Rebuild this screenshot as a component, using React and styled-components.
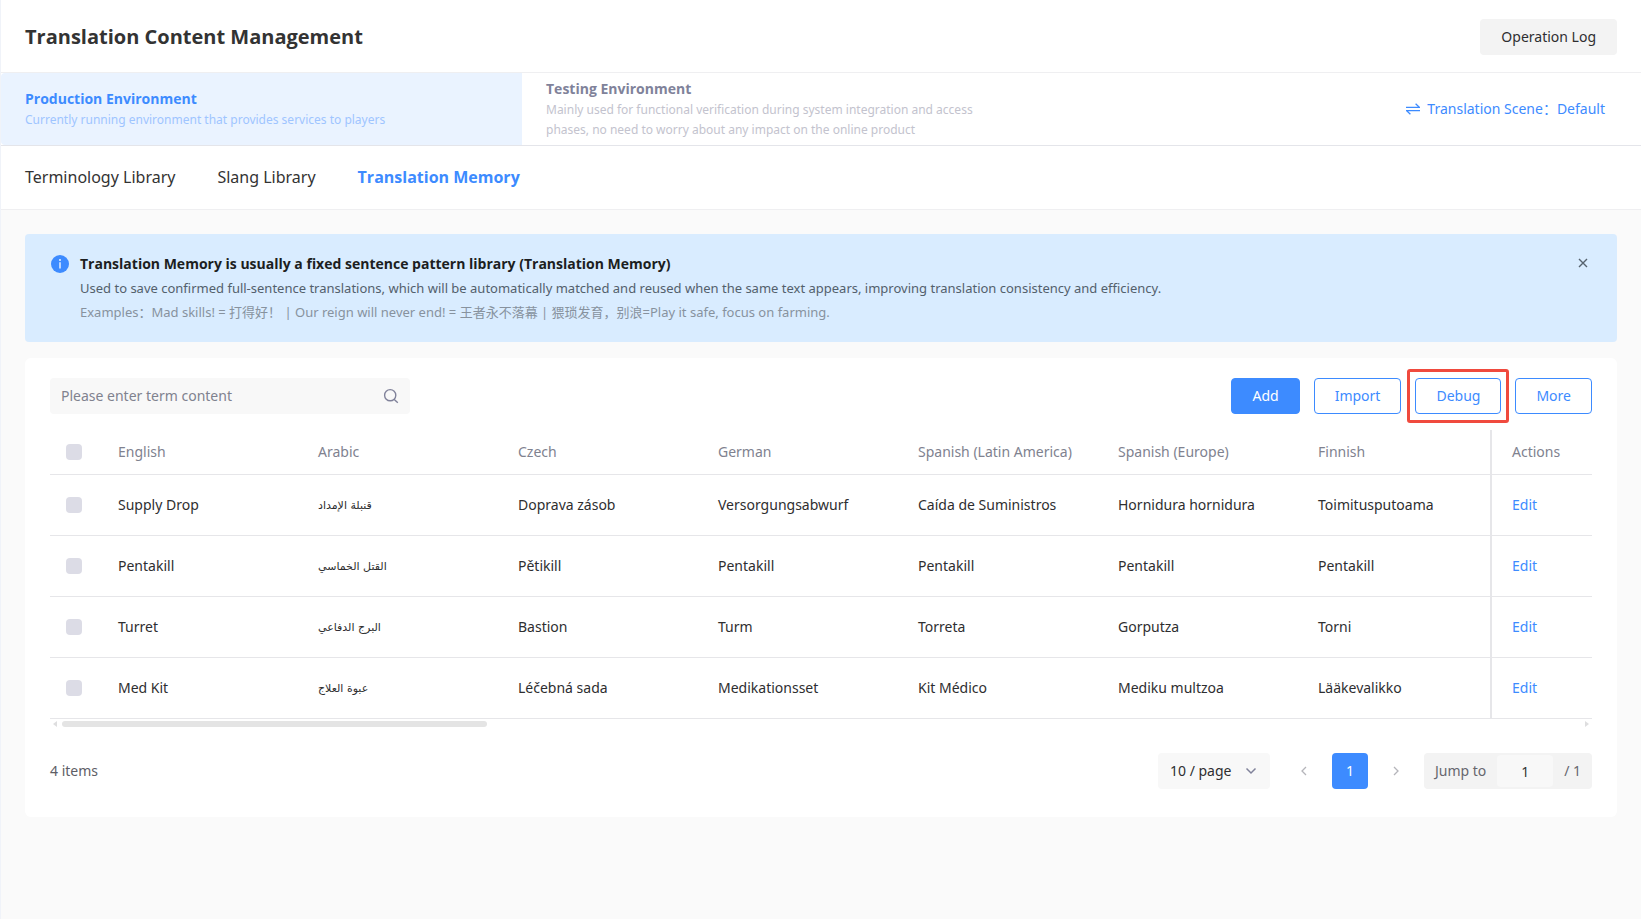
import React, { useState } from 'react';
import styled, { createGlobalStyle, css } from 'styled-components';

const PRIMARY = '#3d8bff';
const BOLD_FONT = `'Open Sans', 'Noto Sans', 'Noto Sans CJK SC', sans-serif`;

const GlobalStyle = createGlobalStyle`
  *, *::before, *::after {
    box-sizing: border-box;
  }
  body {
    margin: 0;
    background: #fafafa;
    color: #2e2e30;
    font-family: 'Noto Sans', 'Noto Sans CJK SC', sans-serif;
    font-size: 14px;
    line-height: 20px;
  }
  button, input, select {
    margin: 0;
    font: inherit;
    color: inherit;
  }
  button {
    border: 0;
    padding: 0;
    background: none;
    cursor: pointer;
  }
`;

const Page = styled.div`
  min-height: 100vh;
  border-left: 1px solid #f0f3f9;
`;

const Header = styled.header`
  height: 73px;
  padding: 2px 24px 0;
  display: flex;
  align-items: center;
  justify-content: space-between;
  background: #fff;
  border-bottom: 1px solid #efeff1;
`;

const Title = styled.h1`
  margin: 0;
  font: 700 20px/28px ${BOLD_FONT};
  color: #333;
`;

const LogButton = styled.button`
  height: 36px;
  padding: 0 21px;
  border-radius: 4px;
  background: #f3f3f3;
`;

const EnvBar = styled.div`
  height: 73px;
  display: flex;
  background: #fff;
  border-bottom: 1px solid #e4e5ea;
`;

const EnvItem = styled.button`
  flex: 0 1 521px;
  padding: 0 24px;
  display: flex;
  flex-direction: column;
  justify-content: center;
  gap: 1px;
  text-align: left;
  color: #c3c3ce;
  strong {
    font: 700 14px/20px ${BOLD_FONT};
    color: #80829a;
  }
  span {
    max-width: 440px;
    font-size: 12px;
    line-height: 20px;
  }
  ${({ $active }) =>
    $active &&
    css`
      background: #eaf3ff;
      border-radius: 4px 0 0 4px;
      color: #9fc5ff;
      strong {
        color: ${PRIMARY};
      }
    `}
`;

const SceneButton = styled.button`
  margin-left: auto;
  padding-right: 36px;
  display: flex;
  align-items: center;
  gap: 7px;
  color: ${PRIMARY};
`;

const Tabs = styled.nav`
  height: 64px;
  padding: 0 24px 2px;
  display: flex;
  align-items: center;
  gap: 42px;
  background: #fff;
  border-bottom: 1px solid #efeff1;
`;

const Tab = styled.a`
  font-size: 16px;
  line-height: 24px;
  color: #333;
  text-decoration: none;
  ${({ $active }) =>
    $active &&
    css`
      font-family: ${BOLD_FONT};
      font-weight: 700;
      color: ${PRIMARY};
    `}
`;

const Content = styled.main`
  padding: 24px;
  display: flex;
  flex-direction: column;
  gap: 16px;
`;

const Banner = styled.section`
  padding: 18px 26px;
  display: flex;
  align-items: flex-start;
  gap: 11px;
  background: #d9ecff;
  border-radius: 4px;
  > svg {
    flex: none;
    margin-top: 3px;
  }
`;

const BannerText = styled.div`
  flex: 1;
  font-size: 13px;
  line-height: 24px;
  color: #53606c;
  h2 {
    margin: 0;
    font: 700 14px/24px ${BOLD_FONT};
    color: #1c1e21;
  }
  p {
    margin: 0;
  }
  p:last-child {
    color: #87929e;
  }
`;

const CloseButton = styled.button`
  height: 22px;
  width: 16px;
  display: flex;
  align-items: center;
  justify-content: center;
  color: #56626e;
`;

const Card = styled.section`
  padding: 20px 25px 28px;
  background: #fff;
  border-radius: 6px;
`;

const Toolbar = styled.div`
  margin-bottom: 16px;
  display: flex;
  align-items: center;
  justify-content: space-between;
`;

const SearchBox = styled.label`
  width: 360px;
  height: 36px;
  padding: 0 11px;
  display: flex;
  align-items: center;
  background: #f8f8f8;
  border-radius: 4px;
  color: #80829a;
  input {
    flex: 1;
    min-width: 0;
    padding: 0;
    border: 0;
    outline: 0;
    background: none;
    color: #333;
  }
  input::placeholder {
    color: #80828f;
    opacity: 1;
  }
`;

const Actions = styled.div`
  display: flex;
  gap: 14px;
`;

const ActionButton = styled.button`
  height: 36px;
  padding: 0 20px;
  border: 1px solid ${PRIMARY};
  border-radius: 4px;
  color: ${({ $solid }) => ($solid ? '#fff' : PRIMARY)};
  background: ${({ $solid }) => ($solid ? PRIMARY : '#fff')};
`;

const Highlight = styled.div`
  position: relative;
  &::after {
    content: '';
    position: absolute;
    inset: -9px -8px;
    border: 3px solid #f04a3e;
    border-radius: 3px;
    pointer-events: none;
  }
`;

const TableWrap = styled.div`
  overflow: hidden;
`;

const Table = styled.table`
  width: 100%;
  table-layout: fixed;
  border-spacing: 0;
  th,
  td {
    padding: 0 16px;
    border-bottom: 1px solid #e6e6e9;
    text-align: left;
    font-weight: 400;
    white-space: nowrap;
  }
  th {
    height: 45px;
    color: #80828f;
  }
  td {
    height: 61px;
  }
  th:last-child,
  td:last-child {
    padding: 0 20px;
    border-left: 2px solid #e6e6e9;
  }
`;

const Col = styled.col`
  width: ${({ $width }) => $width}px;
`;

const Checkbox = styled.input.attrs({ type: 'checkbox' })`
  appearance: none;
  display: block;
  width: 16px;
  height: 16px;
  border-radius: 4px;
  background: #dcdce6;
  cursor: pointer;
  &:checked {
    background: ${PRIMARY};
  }
`;

const Arabic = styled.span`
  font-family: 'DejaVu Sans', sans-serif;
  font-size: 11px;
`;

const EditLink = styled.a`
  color: ${PRIMARY};
  text-decoration: none;
`;

const ScrollTrack = styled.div`
  height: 10px;
  padding: 0 3px;
  display: flex;
  align-items: center;
  gap: 5px;
  color: #dededf;
`;

const ScrollRail = styled.div`
  flex: 1;
`;

const ScrollThumb = styled.div`
  width: 28%;
  height: 6px;
  border-radius: 3px;
  background: #e4e4e4;
`;

const Footer = styled.div`
  margin-top: 24px;
  display: flex;
  align-items: center;
  gap: 10px;
`;

const Total = styled.span`
  margin-right: auto;
  color: #5e5e66;
`;

const PageSize = styled.div`
  position: relative;
  margin-right: 6px;
  select {
    width: 112px;
    height: 36px;
    padding: 0 12px;
    border: 0;
    border-radius: 4px;
    appearance: none;
    background: #f8f8f8;
  }
  svg {
    position: absolute;
    top: 12px;
    right: 13px;
    color: #80829a;
    pointer-events: none;
  }
`;

const PageButton = styled.button`
  width: 36px;
  height: 36px;
  display: flex;
  align-items: center;
  justify-content: center;
  border-radius: 4px;
  color: ${({ $active }) => ($active ? '#fff' : '#b5b5ba')};
  background: ${({ $active }) => ($active ? PRIMARY : 'none')};
`;

const Jump = styled.label`
  width: 168px;
  height: 36px;
  padding: 0 11px;
  display: flex;
  align-items: center;
  justify-content: space-between;
  border-radius: 4px;
  background: #f3f3f3;
  color: #66666e;
  input {
    width: 56px;
    height: 32px;
    padding: 0;
    border: 0;
    border-radius: 4px;
    text-align: center;
    background: #f8f8f8;
    color: #333;
  }
`;

const Stroke = ({ width, height, d, strokeWidth = 1.3 }) => (
  <svg width={width} height={height} viewBox={`0 0 ${width} ${height}`} fill="none" stroke="currentColor" strokeWidth={strokeWidth}>
    <path d={d} />
  </svg>
);

const InfoIcon = () => (
  <svg width="18" height="18" viewBox="0 0 18 18">
    <circle cx="9" cy="9" r="9" fill={PRIMARY} />
    <circle cx="9" cy="5" r="0.9" fill="#fff" />
    <path d="M9 7.2v6.3" stroke="#fff" strokeWidth="1.3" />
  </svg>
);

const SearchIcon = () => (
  <svg width="16" height="16" viewBox="0 0 16 16" fill="none" stroke="currentColor" strokeWidth="1.4">
    <circle cx="7.2" cy="7.2" r="5.6" />
    <path d="M11 11.2l3.8 3.5" />
  </svg>
);

const languages = [
  'English',
  'Arabic',
  'Czech',
  'German',
  'Spanish (Latin America)',
  'Spanish (Europe)',
  'Finnish',
];

const terms = [
  ['Supply Drop', 'قنبلة الإمداد', 'Doprava zásob', 'Versorgungsabwurf', 'Caída de Suministros', 'Hornidura hornidura', 'Toimitusputoama'],
  ['Pentakill', 'القتل الخماسي', 'Pětikill', 'Pentakill', 'Pentakill', 'Pentakill', 'Pentakill'],
  ['Turret', 'البرج الدفاعي', 'Bastion', 'Turm', 'Torreta', 'Gorputza', 'Torni'],
  ['Med Kit', 'عبوة العلاج', 'Léčebná sada', 'Medikationsset', 'Kit Médico', 'Mediku multzoa', 'Lääkevalikko'],
];

function TermTable() {
  const [selected, setSelected] = useState([]);
  const allSelected = selected.length === terms.length;

  const toggle = index => {
    setSelected(selected.includes(index) ? selected.filter(i => i !== index) : [...selected, index]);
  };

  return (
    <TableWrap>
      <Table>
        <colgroup>
          <Col $width={52} />
          {languages.slice(0, -1).map(name => (
            <Col key={name} $width={200} />
          ))}
          <col />
          <Col $width={102} />
        </colgroup>
        <thead>
          <tr>
            <th>
              <Checkbox
                aria-label="Select all"
                checked={allSelected}
                onChange={() => setSelected(allSelected ? [] : terms.map((_, i) => i))}
              />
            </th>
            {languages.map(name => (
              <th key={name}>{name}</th>
            ))}
            <th>Actions</th>
          </tr>
        </thead>
        <tbody>
          {terms.map((term, index) => (
            <tr key={term[0]}>
              <td>
                <Checkbox
                  aria-label={`Select ${term[0]}`}
                  checked={selected.includes(index)}
                  onChange={() => toggle(index)}
                />
              </td>
              {term.map((text, i) => (
                <td key={languages[i]}>{languages[i] === 'Arabic' ? <Arabic lang="ar">{text}</Arabic> : text}</td>
              ))}
              <td>
                <EditLink href="#edit">Edit</EditLink>
              </td>
            </tr>
          ))}
        </tbody>
      </Table>
      <ScrollTrack>
        <svg width="4" height="6" viewBox="0 0 4 6" fill="currentColor">
          <path d="M4 0v6L0 3z" />
        </svg>
        <ScrollRail>
          <ScrollThumb />
        </ScrollRail>
        <svg width="4" height="6" viewBox="0 0 4 6" fill="currentColor">
          <path d="M0 0v6l4-3z" />
        </svg>
      </ScrollTrack>
    </TableWrap>
  );
}

function Pagination() {
  const [page, setPage] = useState('1');

  return (
    <Footer>
      <Total>4 items</Total>
      <PageSize>
        <select aria-label="Items per page" defaultValue="10">
          <option value="10">10 / page</option>
          <option value="20">20 / page</option>
          <option value="50">50 / page</option>
        </select>
        <Stroke width={12} height={12} d="M1.5 3.5L6 8l4.5-4.5" strokeWidth={1.5} />
      </PageSize>
      <PageButton aria-label="Previous page">
        <Stroke width={8} height={12} d="M6 2L2 6l4 4" />
      </PageButton>
      <PageButton $active>1</PageButton>
      <PageButton aria-label="Next page">
        <Stroke width={8} height={12} d="M2 2l4 4-4 4" />
      </PageButton>
      <Jump>
        Jump to
        <input value={page} onChange={e => setPage(e.target.value)} />
        <span>/ 1</span>
      </Jump>
    </Footer>
  );
}

export default function App() {
  const [showBanner, setShowBanner] = useState(true);

  return (
    <Page>
      <GlobalStyle />
      <Header>
        <Title>Translation Content Management</Title>
        <LogButton>Operation Log</LogButton>
      </Header>
      <EnvBar>
        <EnvItem $active>
          <strong>Production Environment</strong>
          <span>Currently running environment that provides services to players</span>
        </EnvItem>
        <EnvItem>
          <strong>Testing Environment</strong>
          <span>
            Mainly used for functional verification during system integration and access phases, no need to worry about
            any impact on the online product
          </span>
        </EnvItem>
        <SceneButton>
          <Stroke width={14} height={12} d="M0 4.3h13.4L9.6 0.8M14 7.7H0.6L4.4 11.2" />
          Translation Scene：Default
        </SceneButton>
      </EnvBar>
      <Tabs>
        <Tab href="#terminology">Terminology Library</Tab>
        <Tab href="#slang">Slang Library</Tab>
        <Tab href="#memory" $active>
          Translation Memory
        </Tab>
      </Tabs>
      <Content>
        {showBanner && (
          <Banner>
            <InfoIcon />
            <BannerText>
              <h2>Translation Memory is usually a fixed sentence pattern library (Translation Memory)</h2>
              <p>
                Used to save confirmed full-sentence translations, which will be automatically matched and reused when
                the same text appears, improving translation consistency and efficiency.
              </p>
              <p>
                Examples：Mad skills! = 打得好！ | Our reign will never end! = 王者永不落幕 | 猥琐发育，别浪=Play it
                safe, focus on farming.
              </p>
            </BannerText>
            <CloseButton aria-label="Close" onClick={() => setShowBanner(false)}>
              <Stroke width={10} height={10} d="M1 1l8 8M9 1L1 9" strokeWidth={1.4} />
            </CloseButton>
          </Banner>
        )}
        <Card>
          <Toolbar>
            <SearchBox>
              <input aria-label="Search terms" placeholder="Please enter term content" />
              <SearchIcon />
            </SearchBox>
            <Actions>
              <ActionButton $solid>Add</ActionButton>
              <ActionButton>Import</ActionButton>
              <Highlight>
                <ActionButton>Debug</ActionButton>
              </Highlight>
              <ActionButton>More</ActionButton>
            </Actions>
          </Toolbar>
          <TermTable />
          <Pagination />
        </Card>
      </Content>
    </Page>
  );
}
